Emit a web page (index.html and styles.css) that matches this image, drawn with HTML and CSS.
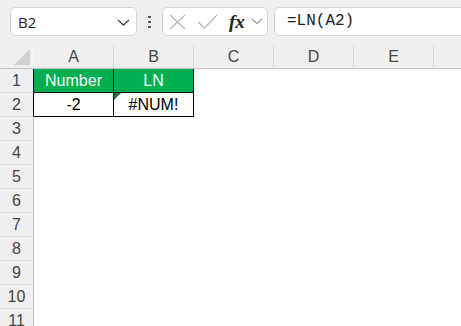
FILE: index.html
```html
<!DOCTYPE html>
<html lang="en">
<head>
  <meta charset="UTF-8" />
  <meta name="viewport" content="width=device-width, initial-scale=1.0"/>
  <title>LN error</title>
  <link rel="stylesheet" href="styles.css">
</head>
<body>

  <div class="toolbar">
    <div class="namebox">
      <span>B2</span>
      <svg class="chev" width="13" height="7" viewBox="0 0 13 7"><path d="M1 1 L6.5 6 L12 1" fill="none" stroke="#444" stroke-width="1.3"/></svg>
    </div>
    <div class="grip"><i></i><i></i><i></i></div>
    <div class="controls">
      <svg width="17" height="16" viewBox="0 0 17 16"><path d="M1 1 L16 15 M16 1 L1 15" stroke="#b4b4b4" stroke-width="1.2"/></svg>
      <svg width="21" height="15" viewBox="0 0 21 15"><path d="M1 8 L7.5 14 L20 1" fill="none" stroke="#b4b4b4" stroke-width="1.2"/></svg>
      <span class="fx">fx</span>
      <svg width="12" height="7" viewBox="0 0 12 7"><path d="M1 1 L6 5.5 L11 1" fill="none" stroke="#9a9a9a" stroke-width="1.1"/></svg>
    </div>
    <div class="formula">=LN(A2)</div>
  </div>

  <div class="sheet">
    <div class="corner"><span class="tri"></span></div>
    <div class="colhead">A</div>
    <div class="colhead">B</div>
    <div class="colhead">C</div>
    <div class="colhead">D</div>
    <div class="colhead">E</div>
    <div class="colhead"></div>

    <div class="rowhead boxed">1</div>
    <div class="cell green">Number</div>
    <div class="cell green">LN</div>
    <div class="cell"></div><div class="cell"></div><div class="cell"></div><div class="cell"></div>

    <div class="rowhead boxed">2</div>
    <div class="cell box">-2</div>
    <div class="cell box err">#NUM!</div>
    <div class="cell"></div><div class="cell"></div><div class="cell"></div><div class="cell"></div>

    <div class="rowhead">3</div><div class="cell"></div><div class="cell"></div><div class="cell"></div><div class="cell"></div><div class="cell"></div><div class="cell"></div>
    <div class="rowhead">4</div><div class="cell"></div><div class="cell"></div><div class="cell"></div><div class="cell"></div><div class="cell"></div><div class="cell"></div>
    <div class="rowhead">5</div><div class="cell"></div><div class="cell"></div><div class="cell"></div><div class="cell"></div><div class="cell"></div><div class="cell"></div>
    <div class="rowhead">6</div><div class="cell"></div><div class="cell"></div><div class="cell"></div><div class="cell"></div><div class="cell"></div><div class="cell"></div>
    <div class="rowhead">7</div><div class="cell"></div><div class="cell"></div><div class="cell"></div><div class="cell"></div><div class="cell"></div><div class="cell"></div>
    <div class="rowhead">8</div><div class="cell"></div><div class="cell"></div><div class="cell"></div><div class="cell"></div><div class="cell"></div><div class="cell"></div>
    <div class="rowhead">9</div><div class="cell"></div><div class="cell"></div><div class="cell"></div><div class="cell"></div><div class="cell"></div><div class="cell"></div>
    <div class="rowhead">10</div><div class="cell"></div><div class="cell"></div><div class="cell"></div><div class="cell"></div><div class="cell"></div><div class="cell"></div>
    <div class="rowhead">11</div><div class="cell"></div><div class="cell"></div><div class="cell"></div><div class="cell"></div><div class="cell"></div><div class="cell"></div>
  </div>

</body>
</html>
```

FILE: styles.css
```css
* {
  box-sizing: border-box;
}
body {
  margin: 0;
  background: #fff;
  font-family: "Liberation Sans", Arial, sans-serif;
  overflow: hidden;
  width: 461px;
  height: 326px;
}
.toolbar {
  display: flex;
  align-items: flex-start;
  height: 45px;
  padding: 7px 0 0 10px;
  background: #efefef;
}
.namebox {
  display: flex;
  align-items: center;
  justify-content: space-between;
  width: 127px;
  height: 29px;
  padding: 0 6px 0 7px;
  background: #fff;
  border: 1px solid #d6d6d6;
  border-radius: 5px;
  font-family: "Open Sans", sans-serif;
  font-size: 15px;
  color: #222;
}
.chev {
  margin-top: 1px;
}
.grip {
  display: flex;
  flex-direction: column;
  gap: 3px;
  width: 3px;
  margin: 9px 11px 0 11px;
}
.grip i {
  display: block;
  width: 3px;
  height: 2px;
  background: #555;
}
.controls {
  display: flex;
  align-items: center;
  width: 106px;
  height: 29px;
  padding: 0 0 0 6px;
  background: #fff;
  border: 1px solid #d6d6d6;
  border-radius: 5px;
}
.controls svg:nth-child(2) {
  margin-left: 11px;
}
.fx {
  margin-left: 11px;
  margin-right: 6px;
  font-family: "Liberation Serif", serif;
  font-style: italic;
  font-weight: bold;
  font-size: 19px;
  color: #222;
  line-height: 1;
}
.formula {
  flex: 1;
  height: 29px;
  margin-left: 6px;
  margin-right: -10px;
  padding: 4px 0 0 12px;
  background: #fff;
  border: 1px solid #d6d6d6;
  border-radius: 5px;
  font-family: "Liberation Mono", monospace;
  font-size: 16px;
  color: #222;
}
.sheet {
  display: grid;
  grid-template-columns: 34px repeat(6, 80px);
  grid-auto-rows: 24px;
}
.corner, .colhead {
  background: #efefef;
  border-bottom: 1px solid #c4c4c4;
}
.corner {
  position: relative;
  border-right: 1px solid #fafafa;
}
.tri {
  position: absolute;
  right: 3px;
  bottom: 3px;
  width: 0;
  height: 0;
  border-left: 16px solid transparent;
  border-bottom: 16px solid #d2d2d2;
}
.colhead {
  border-right: 1px solid #d8d8d8;
  text-align: center;
  line-height: 23px;
  font-size: 16px;
  color: #444;
}
.rowhead {
  background: #efefef;
  border-right: 1px solid #c4c4c4;
  border-bottom: 1px solid #dcdcdc;
  text-align: center;
  line-height: 23px;
  font-size: 16px;
  color: #444;
}
.rowhead.boxed {
  border-right-color: #000;
}
.cell {
  position: relative;
  line-height: 23px;
  font-size: 16px;
  text-align: center;
  color: #000;
}
.green {
  background: #00b050;
  color: #fff;
  border-right: 1px solid #000;
  border-bottom: 1px solid #000;
}
.box {
  border-right: 1px solid #000;
  border-bottom: 1px solid #000;
}
.err::before {
  content: "";
  position: absolute;
  left: 0;
  top: 0;
  border-top: 7px solid #1f7a34;
  border-right: 7px solid transparent;
}
```
